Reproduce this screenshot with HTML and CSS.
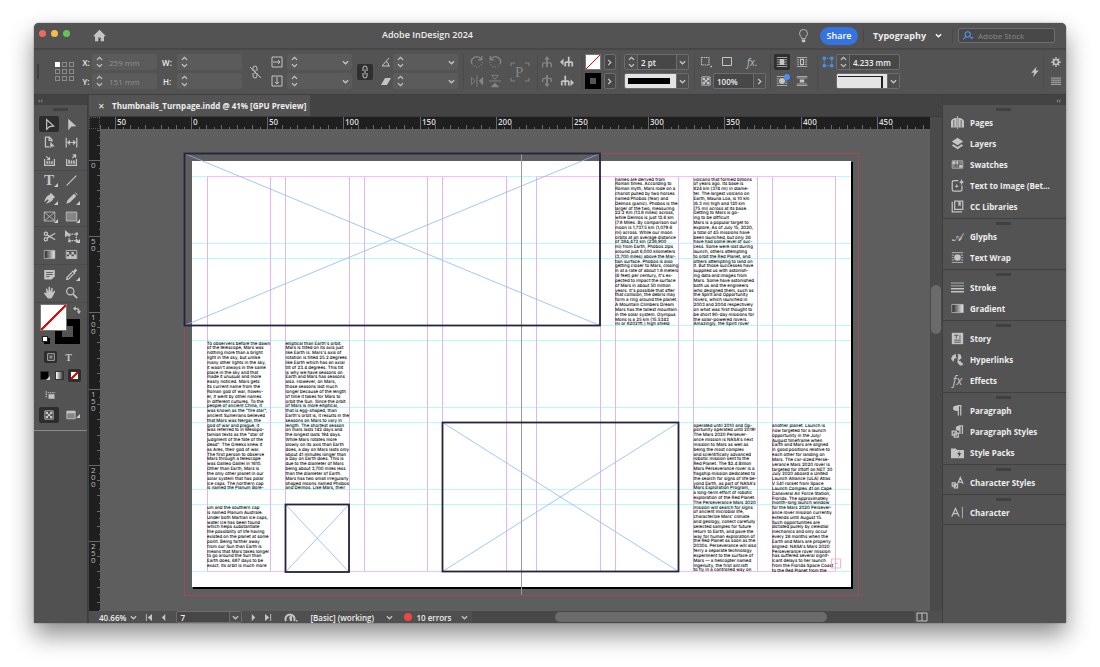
FILE: index.html
```html
<!DOCTYPE html>
<html lang="en">
<head>
    <meta charset="UTF-8">
    <title>Adobe InDesign 2024</title>
    <link rel="stylesheet" href="styles.css">
</head>
<body>
    <svg class="sprite" aria-hidden="true">
        <defs>
            <linearGradient id="fade"><stop offset="0" stop-color="#222"/><stop offset="1" stop-color="#eee"/></linearGradient>
        </defs>
        <symbol id="i-down" viewBox="0 0 8 8"><path class="ln mid" d="M1 2.500 4 5.500 7 2.500"/></symbol>
        <symbol id="i-right" viewBox="0 0 8 8"><path class="ln mid" d="M2.500 1 5.500 4 2.500 7"/></symbol>
        <symbol id="i-spin" viewBox="0 0 8 14"><path class="ln mid" d="M1 4.500 4 1.500 7 4.500M1 9.500 4 12.500 7 9.500"/></symbol>
        <symbol id="i-home" viewBox="0 0 16 16"><path d="M8 1 0 9h2.500v6h4v-4.500h3V15h4V9H16z"/></symbol>
        <symbol id="i-bulb" viewBox="0 0 12 16"><path class="ln" d="M4 11C4 9 1.500 8 1.500 5a4.500 4.500 0 0 1 9 0C10.500 8 8 9 8 11z"/><path d="M4 12h4v2.500l-2 1-2-1z"/></symbol>
        <symbol id="i-link" viewBox="0 0 16 16"><path class="ln" d="M6 7V4a2 2 0 0 1 4 0v3M6 9v3a2 2 0 0 0 4 0V9M8 5.500v5"/></symbol>
        <symbol id="i-unlink" viewBox="0 0 16 16"><path class="ln" d="M6 7V4a2 2 0 0 1 4 0v3M6 9v3a2 2 0 0 0 4 0V9M8 6v4M3 3l11 11"/></symbol>
        <symbol id="i-sx" viewBox="0 0 12 12"><path class="ln" d="M1 1h10v10H1zM2 6h7M7 4l2 2-2 2"/></symbol>
        <symbol id="i-sy" viewBox="0 0 12 12"><path class="ln" d="M1 1h10v10H1zM6 2v7M4 7l2 2 2-2"/></symbol>
        <symbol id="i-angle" viewBox="0 0 12 12"><path class="ln" d="M9 2 2 10h8M6 5.500q3 1 2.500 4.500"/></symbol>
        <symbol id="i-shear" viewBox="0 0 12 12"><path d="M5 3h6l-4 7H1z"/></symbol>
        <symbol id="i-cw" viewBox="0 0 16 16"><path class="ln mid" d="M2 10a6 6 0 0 1 10.500-5.500M13.500 1v4.500H9"/><path class="ln mid dot" d="M14 8a6 6 0 0 1-11.500 2"/></symbol>
        <symbol id="i-ccw" viewBox="0 0 16 16"><path class="ln mid" d="M14 10A6 6 0 0 0 3.500 4.500M2.500 1v4.500H7"/><path class="ln mid dot" d="M2 8a6 6 0 0 0 11.500 2"/></symbol>
        <symbol id="i-fliph" viewBox="0 0 16 16"><path d="M15 3v10L10 8z"/><path class="ln" d="M8 1v14M1.500 4v8L6 8z"/></symbol>
        <symbol id="i-flipv" viewBox="0 0 16 16"><path d="M3 15h10L8 10z"/><path class="ln" d="M1 8h14M4 1.500h8L8 6z"/></symbol>
        <symbol id="i-frame" viewBox="0 0 20 22"><path class="ln" d="M1 5V2h4M15 2h4v3M1 17v3h4M15 20h4v-3"/><text x="5" y="16" class="glyph-serif">P</text></symbol>
        <symbol id="i-treeup" viewBox="0 0 16 16"><path d="M5 5h6L8 1zM7 5h2v9H7z"/><path class="ln mid" d="M3 14v-3q0-2 2-2h6q2 0 2 2v3"/></symbol>
        <symbol id="i-treedown" viewBox="0 0 16 16"><path d="M5 11h6l-3 4zM7 1h2v10H7z"/><path class="ln mid" d="M3 9V7q0-2 2-2h6q2 0 2 2v2"/></symbol>
        <symbol id="i-treeprev" viewBox="0 0 16 16"><path d="M4 4v8L0 8z"/><path class="ln heavy" d="M6 13V8M10 2v11M14 13V8M6 8h8"/></symbol>
        <symbol id="i-treenext" viewBox="0 0 16 16"><path d="M12 6v8l4-4z"/><path class="ln heavy" d="M2 13V8M6 2v11M10 13V8M2 8h8"/></symbol>
        <symbol id="i-corners" viewBox="0 0 16 16"><path class="ln mid dash" d="M3 3h10v10H3z"/><path d="M1 1h4v4H1zM11 1h4v4h-4zM1 11h4v4H1zM11 11h4v4h-4z"/></symbol>
        <symbol id="i-target" viewBox="0 0 16 16"><path class="ln mid dash" d="M2 2h10v10H2z"/><path d="M14 13h2v2h-2z"/></symbol>
        <symbol id="i-rect" viewBox="0 0 12 12"><path class="ln" d="M1.500 1.500h9v8h-9z"/></symbol>
        <symbol id="i-opacity" viewBox="0 0 12 12"><path class="ln" d="M1 1h10v10H1z"/><path d="M2 2h3v3H2zM7 2h3v3H7zM4.500 4.500h3v3h-3zM2 7h3v3H2zM7 7h3v3H7z"/></symbol>
        <symbol id="i-wrap1" viewBox="0 0 16 16"><path class="ln" d="M1 2h14M1 5h14M1 8h14M1 11h14M1 14h14"/><path d="M5 4h6v8H5z"/></symbol>
        <symbol id="i-wrap2" viewBox="0 0 16 16"><path class="ln" d="M1 2h14M1 5h3M1 8h3M1 11h3M12 5h3M12 8h3M12 11h3M1 14h14"/><path class="ln mid" d="M6 4.500h4v7H6z"/></symbol>
        <symbol id="i-wrap3" viewBox="0 0 16 16"><path class="ln" d="M1 2h14M1 5h3M1 8h2M1 11h3M12 5h3M13 8h2M12 11h3M1 14h14"/><circle cx="8" cy="8" r="4"/></symbol>
        <symbol id="i-wrap4" viewBox="0 0 16 16"><path class="ln" d="M1 2h14M1 4h14M1 12h14M1 14h14"/><path d="M5 6h6v4H5z"/></symbol>
        <symbol id="i-bolt" viewBox="0 0 12 16"><path d="M8 1 1 9h4l-2 6 8-9H7z"/></symbol>
        <symbol id="i-gear" viewBox="0 0 12 12"><circle class="ln heavy" cx="6" cy="6" r="3"/><path class="ln mid" d="M6 0v2.500M6 9.500V12M0 6h2.500M9.500 6H12M2 2l1.500 1.500M8.500 8.500 10 10M10 2 8.500 3.500M3.500 8.500 2 10"/></symbol>
        <symbol id="i-menu" viewBox="0 0 12 12"><path class="ln" d="M0 2.500h12M0 5h12M0 7.500h12M0 10h12"/></symbol>
        <symbol id="i-search" viewBox="0 0 16 12"><path class="ln mid" d="M4.500 7.500 1 11"/><circle class="ln mid" cx="7" cy="4.500" r="3.500"/><path d="M10 8h5l-2.500 3z"/></symbol>

        <symbol id="t-select" viewBox="0 0 16 16"><path class="ln mid" d="M4.500 2v12l3.500-3.500L13 10z"/></symbol>
        <symbol id="t-direct" viewBox="0 0 16 16"><path d="M4 1v14l4-4.500 6-.5z"/></symbol>
        <symbol id="t-page" viewBox="0 0 16 16"><path class="ln mid" d="M8 13.500H3v-12h5l3 3V7M7.500 2v3.500H11"/><path d="M9 7v8l2-2h3.500z"/></symbol>
        <symbol id="t-gap" viewBox="0 0 16 16"><path class="ln mid" d="M1.500 2v12M14.500 2v12M4 8h8M6 5.500 3.500 8 6 10.500M10 5.500 12.500 8 10 10.500"/></symbol>
        <symbol id="t-collect" viewBox="0 0 16 16"><path class="ln mid" d="M2 6v8h12V6M4 3l4 4M8 4v3H5"/><path d="M4 9h2v3H4zM7 9h2v3H7zM10 9h2v3h-2z"/></symbol>
        <symbol id="t-place" viewBox="0 0 16 16"><path class="ln mid" d="M2 6v8h12V6M9 5l4-4M9.500 1H13v3.500"/><path d="M4 7h2v5H4zM7 8h2v4H7zM10 8h2v4h-2z"/></symbol>
        <symbol id="t-line" viewBox="0 0 16 16"><path class="ln mid" d="M2 14 14 2"/></symbol>
        <symbol id="t-pen" viewBox="0 0 16 16"><path d="M9.500 1 15 6.500l-2 1C12 11 9 13 3.500 14.500L7 10 6 9l-4.500 3.500C3 7 5 4 8.500 3z"/></symbol>
        <symbol id="t-pencil" viewBox="0 0 16 16"><path d="M1.500 14.500 3 10l8-8 3 3-8 8zM12 1l1-.5 2.500 2.500-.5 1z"/></symbol>
        <symbol id="t-frame" viewBox="0 0 16 16"><path class="ln" d="M1.500 2.500h13v11h-13zM1.500 2.500l13 11M14.500 2.500l-13 11"/></symbol>
        <symbol id="t-rect" viewBox="0 0 16 16"><path class="soft" d="M1.500 2.500h13v11h-13z"/><path class="ln" d="M1.500 2.500h13v11h-13z"/></symbol>
        <symbol id="t-cut" viewBox="0 0 16 16"><path class="ln mid" d="M5 6 15 12M5 10 15 4"/><circle class="ln mid" cx="3.500" cy="4.500" r="2"/><circle class="ln mid" cx="3.500" cy="11.500" r="2"/></symbol>
        <symbol id="t-free" viewBox="0 0 16 16"><path class="ln mid dash" d="M5 5h9v8H5z"/><path d="M0 0v9l3-2h5zM13 3h3v3h-3zM13 12h3v3h-3zM4 12h3v3H4z"/></symbol>
        <symbol id="t-grad" viewBox="0 0 16 16"><path d="M1.500 3h13v10h-13z" fill="url(#fade)" stroke="#b8b8b8"/></symbol>
        <symbol id="t-feather" viewBox="0 0 16 16"><path class="ln" d="M1.500 3h13v10h-13z"/><path d="M2 5h3v3H2zM8 5h3v3H8zM5 8h3v2H5zM11 8h3v2h-3zM2 10h12v3H2z"/></symbol>
        <symbol id="t-note" viewBox="0 0 16 16"><path d="M1.500 2.500h13V10l-4 4h-9z"/><path d="M4 5.500h8M4 8h8M4 10.500h4" stroke="#444"/></symbol>
        <symbol id="t-drop" viewBox="0 0 16 16"><path class="ln mid" d="M8.500 5.500 2.500 11.500 2 14l2.500-.5 6-6"/><path d="M8 4l4 4 1-1-1-1 3-3-2-2.500L10 4 9 3z"/></symbol>
        <symbol id="t-hand" viewBox="0 0 16 16"><path d="M4.500 9 3.500 3.500 5 3 6.500 7.500 7 1h1.500l.5 6 1.500-5 1.500.500L11.500 8 14 5.500l1 1L12 13l-2 2.500H6L1 9l1-1z"/></symbol>
        <symbol id="t-zoom" viewBox="0 0 16 16"><circle class="ln mid" cx="6.500" cy="6.500" r="4.500"/><path class="ln heavy" d="m10 10 5 5"/></symbol>
        <symbol id="t-swap" viewBox="0 0 12 12"><path class="ln heavy" d="M2 4h4q3 0 3 5"/><path d="M4 0v7L0 4zM5.500 8H12l-3 4z"/></symbol>
        <symbol id="t-box" viewBox="0 0 12 12"><path class="ln" d="M2 2h8v8H2z"/><path class="soft" d="M4 4h4v4H4z"/></symbol>
        <symbol id="t-view" viewBox="0 0 16 12"><path class="ln mid dash" d="M5 3h10M3 1v9"/><path d="M6 5h8v6H6z"/></symbol>
        <symbol id="t-win" viewBox="0 0 12 12"><path class="soft" d="M1 1.500h10v9H1z"/><path class="ln" d="M1 1.500h10v9H1z"/><path d="M1 1h10v3H1z"/></symbol>

        <symbol id="p-pages" viewBox="0 0 16 16"><path d="M0 14V7q0-4 7-5v12zM9 14V2q7 1 7 5v7z"/><path class="ln" d="M8 0v16"/><path d="M3.500 5v9M12.500 5v9" stroke="#535353"/></symbol>
        <symbol id="p-layers" viewBox="0 0 16 16"><path d="M8 1 15 5.500 8 10 1 5.500z"/><path d="M3 9l5 3.300L13 9l2 1.500L8 15l-7-4.500z"/></symbol>
        <symbol id="p-swatch" viewBox="0 0 16 16"><path class="ln" d="M1.500 3.500h13v9h-13z"/><path d="M2 4h3.500v4H2zM6.500 4H9v4H6.500zM10 8.500h4V12h-4z"/><path class="soft" d="M10 4h4v4h-4zM2 9h3.500v3H2zM6.500 9H9v3H6.500z"/></symbol>
        <symbol id="p-ai" viewBox="0 0 16 16"><path class="ln mid" d="M9 2H3.500Q1.500 2 1.500 4v9q0 2 2 2h8q2 0 2-2V8"/><path d="m13 0 1 2.500L16 4l-2 .8L13 8l-1-3.200L10 4l2-1.500zM7 6l.8 2 2 .8-2 .7L7 11.500l-.8-2L4.500 9l1.700-1z"/></symbol>
        <symbol id="p-cc" viewBox="0 0 16 16"><path class="ln mid" d="M4.500 1.500h10v10h-10z"/><path d="M9 2h3v6L10.500 6.500 9 8z"/><path class="ln mid" d="M1.500 2v12.500h12"/></symbol>
        <symbol id="p-lines" viewBox="0 0 16 16"><path class="ln" d="M0 2.500h16M0 6h16"/><path class="ln heavy" d="M0 9.500h16M0 13.300h16"/></symbol>
        <symbol id="p-grad" viewBox="0 0 16 16"><path d="M1 3h14v10H1z" fill="url(#fade)" stroke="#b8b8b8"/></symbol>
        <symbol id="p-story" viewBox="0 0 16 16"><path d="M1 1h14v14H1z"/><path d="M4 4h5M6.500 4v4M10 5h2M10 7.500h2M4 10h8M4 12.500h8" stroke="#444"/></symbol>
        <symbol id="p-hyper" viewBox="0 0 16 16"><path d="M6 1 2 3 0 7l3 4 1-4 3-1-1-2zM8 1l4 1 1 4-3 3-2-2 1-3zM8 9l4 1 1 2 2 1-1 2.500h-3L8 12z"/><path class="ln" d="m8 8 5 5"/></symbol>
        <symbol id="p-para" viewBox="0 0 16 16"><path d="M9 2v6.500Q2.500 9 2.500 5.200T9 2z"/><path class="ln mid" d="M9 2v12M12 2v12M8 2h5"/></symbol>
        <symbol id="p-pstyle" viewBox="0 0 16 16"><path d="M11 1v6Q6 7.500 6 4T11 1z"/><path class="ln mid" d="M11 1v10M14 1v10M10 1h5M1.500 7.500h5v5h-5zM4 10h5v5H4z"/></symbol>
        <symbol id="p-pack" viewBox="0 0 16 16"><path d="M0 3h6l1.500 2H16v10H0z"/><path d="M11 6 7.500 10H10l-1 4 3.500-5H10z" fill="#333"/></symbol>
        <symbol id="p-cstyle" viewBox="0 0 16 16"><path class="ln mid" d="M8 10 11.500 2 15 10M9 7.500h5M1.500 8.500h4v4h-4zM4 10.500h4v4H4z"/></symbol>
        <symbol id="p-char" viewBox="0 0 16 16"><path class="ln mid" d="M1 13 5.500 3 10 13M2.500 9.500h6"/><path class="ln" d="M14 1v14"/></symbol>
    </svg>

    <div class="window">
        <header class="titlebar">
            <div class="lights"><i class="red"></i><i class="yellow"></i><i class="green"></i></div>
            <button class="plain home" aria-label="Home"><svg><use href="#i-home"/></svg></button>
            <h1>Adobe InDesign 2024</h1>
            <button class="plain bulb" aria-label="Discover"><svg><use href="#i-bulb"/></svg></button>
            <button class="share">Share</button>
            <button class="plain workspace">Typography <svg><use href="#i-down"/></svg></button>
            <label class="stock"><svg><use href="#i-search"/></svg><input type="search" placeholder="Adobe Stock" aria-label="Adobe Stock"></label>
        </header>

        <section class="controls">
            <i class="grip tall"></i>
            <div class="refpoint tall"><i class="on"></i><i></i><i></i><i></i><i></i><i></i><i></i><i></i><i></i></div>
            <label for="posx">X:</label><label for="posy">Y:</label>
            <div class="field off"><button aria-label="Step X"><svg><use href="#i-spin"/></svg></button><input id="posx" value="259 mm"></div>
            <div class="field off"><button aria-label="Step Y"><svg><use href="#i-spin"/></svg></button><input id="posy" value="151 mm"></div>
            <label for="wid">W:</label><label for="hei">H:</label>
            <div class="field off"><button aria-label="Step W"><svg><use href="#i-spin"/></svg></button><input id="wid"></div>
            <div class="field off"><button aria-label="Step H"><svg><use href="#i-spin"/></svg></button><input id="hei"></div>
            <button class="plain tall" aria-label="Constrain size"><svg class="ic16"><use href="#i-unlink"/></svg></button>
            <svg class="ic12"><use href="#i-sx"/></svg><svg class="ic12"><use href="#i-sy"/></svg>
            <div class="field off"><button aria-label="Step scale X"><svg><use href="#i-spin"/></svg></button><input aria-label="Scale X"><button aria-label="Scale X list"><svg><use href="#i-down"/></svg></button></div>
            <div class="field off"><button aria-label="Step scale Y"><svg><use href="#i-spin"/></svg></button><input aria-label="Scale Y"><button aria-label="Scale Y list"><svg><use href="#i-down"/></svg></button></div>
            <button class="plain pressed tall" aria-label="Constrain scale"><svg class="ic16"><use href="#i-link"/></svg></button>
            <svg class="ic12"><use href="#i-angle"/></svg><svg class="ic12"><use href="#i-shear"/></svg>
            <div class="field off"><button aria-label="Step rotation"><svg><use href="#i-spin"/></svg></button><input aria-label="Rotation"><button aria-label="Rotation list"><svg><use href="#i-down"/></svg></button></div>
            <div class="field off"><button aria-label="Step shear"><svg><use href="#i-spin"/></svg></button><input aria-label="Shear"><button aria-label="Shear list"><svg><use href="#i-down"/></svg></button></div>
            <i class="sep tall"></i>
            <button class="plain dim" aria-label="Rotate clockwise"><svg class="ic14"><use href="#i-cw"/></svg></button>
            <button class="plain dim" aria-label="Flip horizontal"><svg class="ic14"><use href="#i-fliph"/></svg></button>
            <button class="plain dim" aria-label="Rotate counterclockwise"><svg class="ic14"><use href="#i-ccw"/></svg></button>
            <button class="plain dim" aria-label="Flip vertical"><svg class="ic14"><use href="#i-flipv"/></svg></button>
            <svg class="pframe dim tall"><use href="#i-frame"/></svg>
            <i class="sep tall"></i>
            <button class="plain dim" aria-label="Select container"><svg class="ic14"><use href="#i-treeup"/></svg></button>
            <button class="plain dim" aria-label="Select content"><svg class="ic14"><use href="#i-treedown"/></svg></button>
            <button class="plain" aria-label="Previous object"><svg class="ic14"><use href="#i-treeprev"/></svg></button>
            <button class="plain" aria-label="Next object"><svg class="ic14"><use href="#i-treenext"/></svg></button>
            <i class="sep tall"></i>
            <button class="swatch none" aria-label="Fill"></button>
            <button class="swatch black" aria-label="Stroke"></button>
            <button class="open" aria-label="Fill swatches"><svg><use href="#i-right"/></svg></button>
            <button class="open" aria-label="Stroke swatches"><svg><use href="#i-right"/></svg></button>
            <i class="sep tall"></i>
            <div class="field"><button aria-label="Step weight"><svg><use href="#i-spin"/></svg></button><input aria-label="Stroke weight" value="2 pt"><button aria-label="Weight list"><svg><use href="#i-down"/></svg></button></div>
            <div class="field"><span class="stroke-sample"></span><button aria-label="Stroke type"><svg><use href="#i-down"/></svg></button></div>
            <i class="sep tall"></i>
            <button class="plain" aria-label="Effect target"><svg class="ic12"><use href="#i-target"/></svg></button>
            <svg class="ic10"><use href="#i-opacity"/></svg>
            <div class="pair"><button class="plain" aria-label="Drop shadow"><svg class="ic12"><use href="#i-rect"/></svg></button><button class="plain fx">fx.</button></div>
            <div class="field wide"><input aria-label="Opacity" value="100%"><button aria-label="Opacity slider"><svg><use href="#i-right"/></svg></button></div>
            <i class="sep tall"></i>
            <button class="plain pressed" aria-label="No text wrap"><svg class="ic12"><use href="#i-wrap1"/></svg></button>
            <button class="plain badge" aria-label="Wrap around shape"><svg class="ic12"><use href="#i-wrap3"/></svg></button>
            <button class="plain" aria-label="Wrap around box"><svg class="ic12"><use href="#i-wrap2"/></svg></button>
            <button class="plain" aria-label="Jump object"><svg class="ic12"><use href="#i-wrap4"/></svg></button>
            <i class="sep tall"></i>
            <svg class="ic12 blue"><use href="#i-corners"/></svg><span></span>
            <div class="field"><button aria-label="Step corner"><svg><use href="#i-spin"/></svg></button><input aria-label="Corner size" value="4.233 mm"></div>
            <div class="field"><span class="corner-sample"></span><button aria-label="Corner shape"><svg><use href="#i-down"/></svg></button></div>
            <span class="tall"></span>
            <button class="plain tall" aria-label="Quick actions"><svg class="ic12"><use href="#i-bolt"/></svg></button>
            <i class="sep tall"></i>
            <button class="plain" aria-label="Settings"><svg class="ic10"><use href="#i-gear"/></svg></button>
            <button class="plain" aria-label="Panel menu"><svg class="ic10"><use href="#i-menu"/></svg></button>
        </section>

        <main class="workspace-area">
            <aside class="tools">
                <div class="strip">‹‹</div>
                <div class="toolbox">
                    <i class="handle"></i>
                    <div class="toolset">
                        <button class="active" aria-label="Selection"><svg><use href="#t-select"/></svg></button>
                        <button aria-label="Direct selection"><svg><use href="#t-direct"/></svg></button>
                        <button aria-label="Page"><svg><use href="#t-page"/></svg></button>
                        <button aria-label="Gap"><svg><use href="#t-gap"/></svg></button>
                        <button aria-label="Content collector"><svg><use href="#t-collect"/></svg></button>
                        <button aria-label="Content placer"><svg><use href="#t-place"/></svg></button>
                    </div>
                    <div class="toolset">
                        <button class="more type">T</button>
                        <button aria-label="Line"><svg><use href="#t-line"/></svg></button>
                        <button class="more" aria-label="Pen"><svg><use href="#t-pen"/></svg></button>
                        <button class="more" aria-label="Pencil"><svg><use href="#t-pencil"/></svg></button>
                        <button class="more" aria-label="Rectangle frame"><svg><use href="#t-frame"/></svg></button>
                        <button class="more" aria-label="Rectangle"><svg><use href="#t-rect"/></svg></button>
                    </div>
                    <div class="toolset">
                        <button aria-label="Scissors"><svg><use href="#t-cut"/></svg></button>
                        <button class="more" aria-label="Free transform"><svg><use href="#t-free"/></svg></button>
                        <button aria-label="Gradient swatch"><svg><use href="#t-grad"/></svg></button>
                        <button aria-label="Gradient feather"><svg><use href="#t-feather"/></svg></button>
                    </div>
                    <div class="toolset">
                        <button aria-label="Note"><svg><use href="#t-note"/></svg></button>
                        <button class="more" aria-label="Eyedropper"><svg><use href="#t-drop"/></svg></button>
                        <button aria-label="Hand"><svg><use href="#t-hand"/></svg></button>
                        <button aria-label="Zoom"><svg><use href="#t-zoom"/></svg></button>
                    </div>
                    <div class="colors">
                        <button class="big-stroke" aria-label="Stroke colour"></button>
                        <button class="big-fill none" aria-label="Fill colour"></button>
                        <svg class="swap"><use href="#t-swap"/></svg>
                        <i class="reset"></i>
                    </div>
                    <div class="toolrow two">
                        <button class="active" aria-label="Format container"><svg class="ic10"><use href="#t-box"/></svg></button>
                        <button class="small-type">T</button>
                    </div>
                    <div class="toolrow three">
                        <button class="more" aria-label="Apply colour"><i class="chip black"></i></button>
                        <button aria-label="Apply gradient"><i class="chip grad"></i></button>
                        <button class="active" aria-label="Apply none"><i class="chip none"></i></button>
                    </div>
                    <div class="toolrow view"><button aria-label="View options"><svg class="ic12"><use href="#t-view"/></svg></button></div>
                    <div class="toolset modes">
                        <button class="active" aria-label="Normal mode"><svg class="ic10"><use href="#i-opacity"/></svg></button>
                        <button class="more" aria-label="Screen mode"><svg class="ic10"><use href="#t-win"/></svg></button>
                    </div>
                </div>
            </aside>

            <section class="document">
                <div class="tabs"><div class="tab"><button class="plain" aria-label="Close">✕</button>Thumbnails_Turnpage.indd @ 41% [GPU Preview]</div></div>
                <div class="viewport">
                    <div class="corner"></div>
                    <svg class="ruler" id="rulerX"></svg>
                    <svg class="ruler" id="rulerY"></svg>
                    <!-- zero point is the top left corner of the spread, ten units to the pixel -->
                    <svg class="pasteboard" viewBox="-920 -320 8310 4820" preserveAspectRatio="xMinYMin slice">
                        <rect class="page-shadow" x="10" y="10" width="6600" height="4270"/>
                        <rect class="page" width="6590" height="4260"/>
                        <rect class="bleed" x="-75" y="-75" width="6740" height="4420"/>
                        <g id="guides"></g>
                        <g id="stories"></g>
                        <path class="spine" d="M3295 -75V4340"/>
                        <g id="frames"></g>
                        <g class="overset"><rect x="6395" y="3980" width="90" height="90"/><path d="M6420 4025h40"/></g>
                    </svg>
                    <div class="vscroll"><i></i></div>
                </div>
                <footer class="status">
                    <button class="plain zoom">40.66% <svg><use href="#i-down"/></svg></button>
                    <button class="plain nav" aria-label="First page"><svg viewBox="0 0 8 8"><path d="M1 0h1v8H1zM8 0v8L3 4z"/></svg></button>
                    <button class="plain nav" aria-label="Previous page"><svg viewBox="0 0 8 8"><path d="M6 0v8L2 4z"/></svg></button>
                    <div class="field page-no"><input aria-label="Page" value="7"><button aria-label="Page list"><svg><use href="#i-down"/></svg></button></div>
                    <button class="plain nav" aria-label="Next page"><svg viewBox="0 0 8 8"><path d="M2 0v8L6 4z"/></svg></button>
                    <button class="plain nav" aria-label="Last page"><svg viewBox="0 0 8 8"><path d="M6 0h1v8H6zM0 0v8L5 4z"/></svg></button>
                    <svg class="gauge" viewBox="0 0 14 10"><path class="ln heavy" d="M2 9a4.500 4.500 0 1 1 8 0"/><path d="M5 5 8 3v6H6z"/><path d="M12 8h1.500v1.500H12z"/></svg>
                    <button class="plain profile">[Basic] (working) <svg><use href="#i-down"/></svg></button>
                    <button class="plain errors"><i></i>10 errors <svg><use href="#i-down"/></svg></button>
                    <div class="hscroll"><i></i></div>
                    <svg class="split" viewBox="0 0 12 10"><path class="ln" d="M1 1h10v8H1zM6 1v8"/></svg>
                </footer>
            </section>

            <aside class="dock">
                <div class="strip">‹‹</div>
                <div class="group">
                    <button><svg><use href="#p-pages"/></svg>Pages</button>
                    <button><svg><use href="#p-layers"/></svg>Layers</button>
                    <button><svg><use href="#p-swatch"/></svg>Swatches</button>
                    <button><svg><use href="#p-ai"/></svg>Text to Image (Bet...</button>
                    <button><svg><use href="#p-cc"/></svg>CC Libraries</button>
                </div>
                <div class="group">
                    <button><span class="glyph script">𝒜</span>Glyphs</button>
                    <button><svg><use href="#i-wrap3"/></svg>Text Wrap</button>
                </div>
                <div class="group">
                    <button><svg><use href="#p-lines"/></svg>Stroke</button>
                    <button><svg><use href="#p-grad"/></svg>Gradient</button>
                </div>
                <div class="group">
                    <button><svg><use href="#p-story"/></svg>Story</button>
                    <button><svg><use href="#p-hyper"/></svg>Hyperlinks</button>
                    <button><span class="glyph">fx</span>Effects</button>
                </div>
                <div class="group">
                    <button><svg><use href="#p-para"/></svg>Paragraph</button>
                    <button><svg><use href="#p-pstyle"/></svg>Paragraph Styles</button>
                    <button><svg><use href="#p-pack"/></svg>Style Packs</button>
                </div>
                <div class="group">
                    <button><svg><use href="#p-cstyle"/></svg>Character Styles</button>
                </div>
                <div class="group">
                    <button><svg><use href="#p-char"/></svg>Character</button>
                </div>
            </aside>
        </main>
    </div>
    <script src="layout.js"></script>
</body>
</html>
```
FILE: layout.js
```js
const NS = 'http://www.w3.org/2000/svg';

function add(parent, tag, attrs, text) {
    const el = document.createElementNS(NS, tag);
    for (const key in attrs) el.setAttribute(key, attrs[key]);
    if (text) el.textContent = text;
    parent.appendChild(el);
    return el;
}

// rulers: 50 mm is 76.2 px at this zoom
const STEP = 76.2;
const rulerX = document.getElementById('rulerX');
const rulerY = document.getElementById('rulerY');
const lengthX = rulerX.getBoundingClientRect().width;
const lengthY = rulerY.getBoundingClientRect().height;
for (let n = -2; n < 40; n++) {
    const x = Math.round(91 + n * STEP);
    const y = Math.round(31 + n * STEP);
    add(rulerX, 'path', { d: `M${x}.5 0V12` });
    add(rulerY, 'path', { d: `M0 ${y}.5H12` });
    for (let k = 1; k < 10; k++) {
        const d = Math.round(k * STEP / 10);
        const len = k % 2 ? 2 : 4;
        add(rulerX, 'path', { d: `M${x + d}.5 ${12 - len}V12` });
        add(rulerY, 'path', { d: `M${12 - len} ${y + d}.5H12` });
    }
    const label = String(Math.abs(n * 50));
    if (x > 0 && x + 16 < lengthX) add(rulerX, 'text', { x: x + 2, y: 8 }, label);
    if (y > 0 && y + 22 < lengthY) [...label].forEach((c, i) => add(rulerY, 'text', { x: 2, y: y + 8 + i * 7 }, c));
}

// column and row guides
const cols = [150, 780, 930, 1570, 1720, 2350, 2500, 3140, 3440, 4080, 4230, 4860, 5010, 5650, 5800, 6430];
const rows = [150, 820, 970, 1640, 1790, 2460, 2610, 3280, 3430, 4100];
const guides = document.getElementById('guides');
rows.forEach(y => add(guides, 'path', { class: 'row', d: `M0 ${y + 5}H6590` }));
cols.forEach(x => add(guides, 'path', { class: 'col', d: `M${x + 5} 150V4100` }));
[150, 4100].forEach(y => add(guides, 'path', { class: 'margin', d: `M150 ${y + 5}H3140M3440 ${y + 5}H6430` }));

// empty picture frames
const frames = document.getElementById('frames');
[[-75, -75, 4155, 1720], [935, 3435, 635, 675], [2505, 2615, 2360, 1490]].forEach(([x, y, w, h]) => {
    add(frames, 'path', { class: 'cross', d: `M${x} ${y}l${w} ${h}M${x + w} ${y}l${-w} ${h}` });
    add(frames, 'rect', { class: 'frame', x: x, y: y, width: w, height: h });
});

// threaded text, one entry per column
const stories = [
    { x: 4230, y: 155, lines: `names are derived from
Roman times. According to
Roman myth, Mars rode on a
chariot pulled by two horses
named Phobos (fear) and
Deimos (panic). Phobos is the
larger of the two, measuring
22.2 Km (13.8 miles) across,
while Deimos is just 12.6 km
(7.8 Miles. By comparison our
moon is 1,737.5 km (1,079.6
mi) across. While our moon
orbits at an average distance
of 384,472 km (238,900
mi) from Earth, Phobos zips
around just 6,000 kilometers
(3,700 miles) above the Mar-
tian surface. Phobos is also
getting closer to Mars, closing
in at a rate of about 1.8 meters
(6 feet) per century, it's ex-
pected to impact the surface
of Mars in about 50 million
years. It's possible that after
that collision, the debris may
form a ring around the planet.
A Mountain Climbers Dream
Mars has the tallest mountain
in the solar system. Olympus
Mons is a 25 km (15.5343
mi or 82021ft.) high shield` },
    { x: 5015, y: 155, lines: `volcano that formed billions
of years ago. Its base is
624 km (374 mi) in diame-
ter. The largest volcano on
Earth, Mauna Loa, is 10 km
(6.3 mi) high and 120 km
(75 mi) across at its base.
Getting to Mars is go-
ing to be difficult
Mars is a popular target to
explore, As of July 15, 2020,
a total of 45 missions have
been launched, but only 26
have had some level of suc-
cess. Some were lost during
launch, others attempting
to orbit the Red Planet, and
others attempting to land on
it. But those successes have
supplied us with astonish-
ing data and images from
Mars. Some have astonished
both us and the engineers
who designed them, such as
the Spirit and Opportunity
rovers, which launched in
2003 and 2004 respectively
on what was first thought to
be short 90-day missions for
the solar-powered rovers.
Amazingly, the Spirit rover` },
    { x: 150, y: 1795, lines: `To observers before the dawn
of the telescope, Mars was
nothing more than a bright
light in the sky, but unlike
many other lights in the sky,
it wasn't always in the same
place in the sky and that
made it unusual and more
easily noticed. Mars gets
its current name from the
Roman god of war, howev-
er, it went by other names
in different cultures. To the
people of ancient China, it
was known as the "fire star",
ancient Sumerians believed
that Mars was Nergal, the
god of war and plague, it
was referred to in Mesopo-
tamian texts as the "star of
judgment of the fate of the
dead". The Greeks knew it
as Ares, their god of war.
The first person to observe
Mars through a telescope
was Galileo Galilei in 1610.
Other than Earth, Mars is
the only other planet in our
solar system that has polar
ice caps. The northern cap
is named the Planum Bore-` },
    { x: 935, y: 1795, lines: `elliptical than Earth's orbit.
Mars is tilted on its axis just
like Earth is. Mars's axis of
rotation is tilted 25.2 degrees
like Earth which has an axial
tilt of 23.4 degrees. This tilt
is why we have seasons on
Earth and Mars has seasons
also. However, on Mars,
those seasons last much
longer because of the length
of time it takes for Mars to
orbit the Sun. Since the orbit
of Mars is more elliptical,
that is egg-shaped, than
Earth's orbit is, it results in the
seasons on Mars to vary in
length. The shortest season
on mars lasts 142 days and
the longest lasts 194 days.
While Mars rotates more
slowly on its axis than Earth
does, a day on Mars lasts only
about 41 minutes longer than
a Day on Earth does. This is
due to the diameter of Mars
being about 3,700 miles less
than the diameter of Earth.
Mars has two small irregularly
shaped moons named Phobos
and Deimos. Like Mars, their` },
    { x: 150, y: 3440, lines: `um and the southern cap
is named Planum Australe.
Under both Martian ice caps,
water ice has been found
which helps substantiate
the possibility of life having
existed on the planet at some
point. Being farther away
from our Sun than Earth is
means that Mars takes longer
to go around the Sun than
Earth does, 687 days to be
exact. Its orbit is much more` },
    { x: 5015, y: 2615, lines: `operated until 2010 and Op-
portunity operated until 2019!
The Mars 2020 Persever-
ance mission is NASA's next
mission to Mars as well as
being the most complex
and scientifically advanced
robotic mission sent to the
Red Planet. The $2.4 Billion
Mars Perseverance rover is a
flagship mission dedicated to
the search for signs of life be-
yond Earth, as part of NASA's
Mars Exploration Program,
a long-term effort of robotic
exploration of the Red Planet.
The Perseverance Mars 2020
mission will search for signs
of ancient microbial life,
characterize Mars' climate
and geology, collect carefully
selected samples for future
return to Earth, and pave the
way for human exploration of
the Red Planet as soon as the
2030s. Perseverance will also
ferry a separate technology
experiment to the surface of
Mars — a helicopter named
Ingenuity, the first aircraft
to fly in a controlled way on` },
    { x: 5800, y: 2620, lines: `another planet. Launch is
now targeted for a launch
opportunity in the July/
August timeframe when
Earth and Mars are aligned
in good positions relative to
each other for landing on
Mars. The car-sized Perse-
verance Mars 2020 rover is
targeted for liftoff on NET 30
July 2020 aboard a United
Launch Alliance (ULA) Atlas
V 541 rocket from Space
Launch Complex 41 on Cape
Canaveral Air Force Station,
Florida. The approximately
month-long launch window
for the Mars 2020 Persever-
ance rover mission currently
extends until August 15.
Such opportunities are
dictated purely by celestial
mechanics and only occur
every 26 months when the
Earth and Mars are properly
aligned. NASA's Mars 2020
Perseverance rover mission
has suffered several signif-
icant delays to her launch
from the Florida Space Coast
to the Red Planet from the` }
];

const storyLayer = document.getElementById('stories');
stories.forEach(s => {
    s.lines.split('\n').forEach((line, i) => {
        add(storyLayer, 'text', { x: s.x, y: s.y + Math.round(40 + i * 48.3) }, line);
    });
});
```
FILE: styles.css
```css
* { box-sizing: border-box; }
body { margin: 0; height: 100vh; padding: 23px 34px 44px; background: #fff; font-family: "Open Sans", sans-serif; font-size: 8px; color: #eee; }
button, input { font: inherit; color: inherit; padding: 0; margin: 0; border: 0; background: none; min-width: 0; }
input { outline: none; }
svg { fill: #c4c4c4; color: #c4c4c4; display: block; flex: none; }
.sprite { position: absolute; width: 0; height: 0; }
.ln { fill: none; stroke: currentColor; stroke-width: 1; }
.mid { stroke-width: 1.5; }
.heavy { stroke-width: 2; }
.dot { stroke-dasharray: 1 2; }
.dash { stroke-dasharray: 2 1; }
.soft { fill: #858585; }
.blue { color: #4b91f0; fill: #4b91f0; }
.ic10 { width: 10px; height: 10px; }
.ic12 { width: 12px; height: 12px; }
.ic14 { width: 14px; height: 14px; }
.ic16 { width: 16px; height: 16px; }
.plain { display: flex; align-items: center; justify-content: center; }
.dim svg, svg.dim { color: #858585; fill: #858585; }
.none { background: linear-gradient(135deg, transparent 47%, #f00 47%, #f00 53%, transparent 53%) #fff; }
.black { background: #000; }

.window { height: 100%; display: flex; flex-direction: column; background: #4a4a4a; border-radius: 5px 5px 0 0; overflow: hidden; box-shadow: 0 12px 24px rgba(0,0,0,.45), 0 0 2px rgba(0,0,0,.4); }

/* title bar */
.titlebar { flex: none; height: 27px; display: flex; align-items: center; background: #535353; border-bottom: 2px solid #474747; padding-right: 11px; }
.lights { display: flex; gap: 5px; align-self: flex-start; padding: 7px 0 0 5px; }
.lights i { width: 7px; height: 7px; border-radius: 50%; }
.red { background: #ee6a5f; }
.yellow { background: #f5bd4f; }
.green { background: #61c454; }
.home { margin-left: 23px; }
.home svg { width: 13px; height: 13px; }
h1 { margin: 0 auto 3px 276px; font-size: 9px; font-weight: 600; }
.bulb svg { width: 11px; height: 14px; }
.share { width: 38px; height: 18px; margin-left: 11px; border-radius: 9px; background: #3573e3; color: #fff; font-size: 9px; font-weight: 600; }
.workspace { height: 14px; margin: 0 5px; padding: 0 10px 0 9px; gap: 9px; border: solid #474747; border-width: 0 1px; font-size: 9px; font-weight: 700; }
.workspace svg { width: 7px; height: 7px; color: #fff; }
.stock { width: 97px; height: 15px; display: flex; align-items: center; gap: 3px; padding-left: 3px; border: 1px solid #6e6e6e; border-radius: 2px; background: #484848; }
.stock svg { width: 13px; height: 9px; color: #4b91f0; fill: #4b91f0; }
.stock input { width: 100%; }
.stock input::placeholder { color: #8b8b8b; }

/* control bar */
.controls { flex: none; height: 45px; padding: 4px 0 5px; display: grid; grid-auto-flow: column; grid-template-rows: 16px 16px; row-gap: 3px; align-items: center; justify-items: center; background: #535353; border-bottom: 1px solid #3e3e3e;
    grid-template-columns: 18px 28px 12px 65px 20px 65px 25px 20px 65px 26px 15px 65px 10px 17px 20px 29px 6px 14px 26px 5px 19px 11px 9px 65px 10px 14px 53px 8px 16px 24px 6px 16px 64px 1fr 20px 5px 20px; }
.controls > button:nth-last-child(4) { justify-self: end; }
.tall { grid-row: span 2; }
.grip { width: 2px; height: 15px; background: #404040; justify-self: start; margin-left: 3px; }
.sep { width: 1px; height: 35px; background: #4a4a4a; }
.controls label { font-weight: 600; }
.refpoint { display: grid; grid-template-columns: repeat(3, 5px); gap: 2px; margin-right: 4px; }
.refpoint i { height: 5px; border: 1px solid #8b8b8b; }
.refpoint .on { background: #fff; border-color: #fff; }
.field { width: 100%; height: 16px; display: flex; align-items: stretch; border: 1px solid #6c6c6c; border-radius: 2px; background: #474747; overflow: hidden; }
.field button { flex: none; width: 12px; display: flex; align-items: center; justify-content: center; background: #4f4f4f; }
.field button + input { border-left: 1px solid #6c6c6c; }
.field input + button, .field span + button { border-left: 1px solid #6c6c6c; }
.field input { flex: 1; width: 10px; padding-left: 3px; font-weight: 600; }
.field svg { width: 7px; height: 7px; }
.field button:first-child svg { height: 12px; }
.off, .off button, .field.off button + input, .field.off input + button { border-color: #5b5b5b; background: #5b5b5b; }
.off input { color: #929292; font-weight: 400; }
.pressed { width: 16px; height: 16px; background: #2f2f2f; border-radius: 2px; }
.pframe { width: 20px; height: 22px; }
.glyph-serif { font: 15px "Liberation Serif", serif; }
.swatch { width: 16px; height: 16px; justify-self: start; border: 1px solid #777; }
.swatch.black { box-shadow: inset 0 0 0 4px #000; background: #555; border-color: #000; }
.open { width: 12px; height: 16px; display: flex; align-items: center; justify-content: center; border: 1px solid #6c6c6c; border-radius: 2px; background: #474747; }
.open svg { width: 7px; height: 7px; }
.stroke-sample { flex: 1; border: solid #e4e4e4; border-width: 4px 6px 4px 3px; background: #000; }
.corner-sample { flex: 1; background: #e4e4e4; padding: 2px 4px 1px 1px; }
.corner-sample::before { content: ""; display: block; height: 11px; border: solid #222; border-width: 1px 2px 0 0; }
.pair { width: 100%; display: flex; gap: 14px; padding-left: 8px; }
.fx { font: italic 10px "Open Sans", sans-serif; color: #bdbdbd; }
.badge { position: relative; }
.badge::after { content: ""; position: absolute; top: -1px; right: -2px; width: 6px; height: 6px; border-radius: 50%; background: #4b91f0; }

/* body of the window */
.workspace-area { flex: 1; min-height: 0; display: grid; grid-template-columns: 54px 1fr 124px; background: #434343; }
.strip { height: 10px; line-height: 10px; color: #aaa; background: #434343; }
.tools { border-right: 1px solid #3e3e3e; background: #515151; }
.tools .strip { padding-left: 4px; }
.toolbox { padding-top: 3px; border-bottom: 1px solid #8a8a8a; background: #535353; }
.handle { display: block; width: 15px; height: 3px; margin: 0 auto 4px; background: #404040; }
.tools button { position: relative; display: flex; align-items: center; justify-content: center; }
.toolset { display: grid; grid-template-columns: 20px 20px; grid-auto-rows: 18px; gap: 0 2px; padding: 0 4px 1px 5px; border-bottom: 1px solid #4a4a4a; }
.toolset svg { width: 13px; height: 13px; }
.toolset .ic10 { width: 10px; height: 10px; }
.active { background: #2d2d2d; border-radius: 2px; }
.toolset .active { height: 16px; align-self: center; }
.more::after { content: ""; position: absolute; right: 1px; bottom: 2px; border: 2px solid #ccc; border-top-color: transparent; border-left-color: transparent; }
.tools .type { font: 700 15px "Liberation Serif", serif; color: #c4c4c4; }
.colors { position: relative; height: 42px; margin: 1px 6px 0; }
.big-fill { position: absolute !important; left: 0; top: 0; width: 27px; height: 27px; border: 1px solid #777; }
.big-stroke { position: absolute !important; left: 15px; top: 15px; width: 25px; height: 25px; background: #535353; border: 7px solid #000; }
.swap { position: absolute; right: 0; top: 2px; width: 8px; height: 8px; }
.reset { position: absolute; left: 2px; bottom: 4px; width: 6px; height: 6px; background: #fff; border: 1px solid #222; box-shadow: 2px 2px 0 #000; }
.toolrow { display: flex; height: 18px; align-items: center; }
.two { padding-left: 10px; gap: 5px; margin-top: 2px; }
.two button { width: 13px; height: 12px; }
.tools .small-type { font: 700 10px "Liberation Serif", serif; color: #c4c4c4; }
.three { padding-left: 4px; gap: 2px; }
.three button { width: 13px; height: 13px; }
.chip { width: 9px; height: 9px; border: 1px solid #333; }
.chip.none { background: linear-gradient(135deg, transparent 40%, #f00 40%, #f00 60%, transparent 60%) #fff; }
.grad { background: linear-gradient(90deg, #fff, #333); }
.view { height: 22px; padding-left: 10px; }
.modes { height: 24px; align-items: center; border-bottom: 0; }

/* document */
.document { min-width: 0; min-height: 0; display: flex; flex-direction: column; padding-left: 1px; }
.tabs { flex: none; height: 22px; background: #434343; border-bottom: 1px solid #3a3a3a; display: flex; }
.tab { width: 221px; display: flex; align-items: center; gap: 7px; padding-left: 9px; background: #535353; font-weight: 700; white-space: nowrap; }
.tab button { font-weight: 400; }
.viewport { flex: 1; min-height: 0; display: grid; grid-template: 12px 1fr / 11px 1fr 12px; background: #4a4a4a; }
.corner { background: #1f1f1f; border: 1px dotted #555; }
.ruler { width: 100%; height: 100%; overflow: hidden; background: #1f1f1f; }
.ruler path { stroke: #686868; }
.ruler text { font-size: 8px; font-weight: 600; fill: #ddd; }
#rulerY { grid-area: 2 / 1; }
#rulerY text { font-weight: 400; fill: #bbb; }
.pasteboard { grid-area: 2 / 2; width: 100%; height: 100%; background: #5e5e5e; }
.page { fill: #fff; }
.page-shadow { fill: #000; }
.bleed { fill: none; stroke: #a04a58; stroke-width: 10; }
.pasteboard text { font-family: Inter, sans-serif; font-size: 44px; font-weight: 500; fill: #000; text-rendering: geometricPrecision; }
#guides path { stroke-width: 10; fill: none; }
.row { stroke: #b4fbfd; }
.col { stroke: #dcb8fb; }
#guides .margin { stroke: #fcbcf4; }
.spine { stroke: #999; stroke-width: 10; }
.frame { fill: none; stroke: #26233f; stroke-width: 18; }
.cross { fill: none; stroke: #8cb8f8; stroke-width: 8; }
.overset { fill: none; stroke: #f5aaaa; stroke-width: 8; }
.vscroll { grid-area: 2 / 3; padding-top: 156px; }
.vscroll i { display: block; width: 10px; height: 49px; margin-left: 1px; border-radius: 5px; background: #6b6b6b; }

.status { flex: none; height: 12px; display: flex; align-items: center; background: #4f4f4f; font-weight: 600; white-space: nowrap; }
.status button svg { width: 7px; height: 7px; }
.zoom { gap: 4px; margin-left: 10px; }
.nav { width: 7px; margin-left: 8px; }
.page-no { flex: none; width: 66px; height: 12px; margin-left: 9px; }
.gauge { width: 14px; height: 10px; margin-left: 12px; }
.profile { width: 83px; justify-content: space-between; margin-left: 12px; }
.errors { width: 64px; gap: 4px; margin: 0 4px 0 11px; }
.errors i { width: 8px; height: 8px; border-radius: 50%; background: #e8483f; }
.errors svg { margin-left: auto; }
.hscroll { flex: 1; height: 12px; padding: 1px 87px 1px 83px; background: #484848; }
.hscroll i { display: block; height: 10px; border-radius: 5px; background: #6b6b6b; }
.split { width: 12px; height: 10px; margin: 0 14px 0 2px; }

/* panel dock */
.dock { border-left: 1px solid #3e3e3e; background: #535353; min-width: 0; }
.dock .strip { text-align: right; padding-right: 5px; }
.group { padding: 7px 0 1px; border-bottom: 1px solid #404040; background: linear-gradient(#404040, #404040) 53px 3px / 15px 3px no-repeat; }
.group button { width: 100%; height: 21px; display: flex; align-items: center; gap: 6px; padding-left: 8px; font-weight: 700; text-align: left; white-space: nowrap; }
.group svg { width: 13px; height: 13px; }
.glyph { width: 13px; font: italic 12px "Open Sans", sans-serif; color: #c4c4c4; text-align: center; }
.script { font-style: normal; font-family: "DejaVu Sans", "DejaVu Serif", serif; }
```
